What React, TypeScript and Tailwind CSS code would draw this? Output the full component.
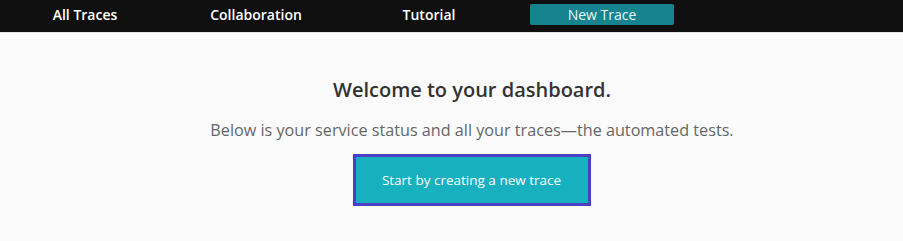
export default function App() {
  const font = { fontFamily: '"Open Sans", "Liberation Sans", sans-serif' };
  return (
    <div className="min-h-[241px] w-full bg-[#fbfbfb]" style={font}>
      <nav className="flex h-[33px] items-start pt-[4px] bg-[#0f0f0f] border-b border-[#e5e5e5]">
        <div className="flex w-[170px] justify-center">
          <a className="text-[14px] leading-[21px] font-semibold text-white">All Traces</a>
        </div>
        <div className="flex w-[172px] justify-center">
          <a className="text-[14px] leading-[21px] font-semibold text-white">Collaboration</a>
        </div>
        <div className="flex w-[174px] justify-center">
          <a className="text-[14px] leading-[21px] font-semibold text-white">Tutorial</a>
        </div>
        <div className="flex w-[172px] justify-center">
          <button className="h-[21px] w-[144px] rounded-[2px] bg-[#16848f] text-[14px] leading-[21px] text-[#e8f6f7]">
            New Trace
          </button>
        </div>
      </nav>
      <main className="flex flex-col items-center pt-[43px] pl-[41px]">
        <h1 className="text-[20px] leading-[27px] font-semibold text-[#333333]">Welcome to your dashboard.</h1>
        <p className="mt-[15px] text-[16.2px] leading-[24px] text-[#666666]">
          Below is your service status and all your traces—the automated tests.
        </p>
        <button className="mt-[12px] ml-[-1px] h-[52px] w-[238px] border-[3px] border-[#4a3ec2] bg-[#17b0bf] text-[13.5px] text-white">
          Start by creating a new trace
        </button>
      </main>
    </div>
  );
}
